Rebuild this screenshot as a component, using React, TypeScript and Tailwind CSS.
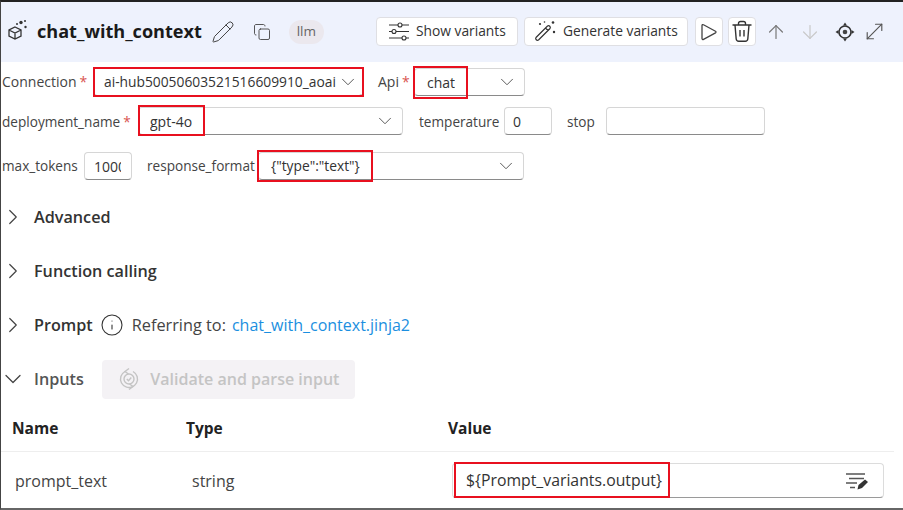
import { ChevronDown, ChevronRight, Pencil, Copy, ArrowUp, ArrowDown, Info, MoveDiagonal } from "lucide-react";

const font = "font-['Open_Sans','Liberation_Sans',sans-serif]";

function Redbox({ className }: { className: string }) {
  return <div className={`absolute border-[2px] border-[#e8101f] pointer-events-none ${className}`} />;
}

function Field({ className, text, chevron }: { className: string; text?: string; chevron?: boolean }) {
  return (
    <div className={`h-[28px] bg-white border border-[#d6d6d6] border-b-[#8a8a8a] rounded-[4px] flex items-center justify-between text-[#333] ${className}`}>
      <span className="whitespace-nowrap overflow-hidden">{text}</span>
      {chevron && <ChevronDown size={22} strokeWidth={1.05} className="text-[#555] shrink-0" />}
    </div>
  );
}

function Label({ text, required, className }: { text: string; required?: boolean; className: string }) {
  return (
    <div className={`flex items-center text-[#444] shrink-0 ${className}`}>
      <span>{text}</span>
      {required && <span className="ml-[3px] text-[#d9534f]">*</span>}
    </div>
  );
}

function ToolButton({ icon, label, className }: { icon: React.ReactNode; label?: string; className: string }) {
  return (
    <div className={`h-[29px] bg-white border border-[#dfdfe3] rounded-[4px] flex items-center justify-center gap-[6px] text-[13.8px] text-[#333] ${className}`}>
      {icon}
      {label && <span>{label}</span>}
    </div>
  );
}

function SectionRow({ title, className }: { title: string; className?: string }) {
  return (
    <div className={`flex items-center h-[24px] ${className ?? ""}`}>
      <ChevronRight size={26} strokeWidth={1.1} className="text-[#444] -ml-[1px]" />
      <span className="ml-[8px] text-[16.2px] font-semibold text-[#333]">{title}</span>
    </div>
  );
}

function NodeIcon() {
  return (
    <svg width="20" height="22" viewBox="0 0 20 22" fill="none" stroke="#333" strokeWidth="1.3" className="ml-[7px] mb-[4px]">
      <path d="M7 8l6 3v6l-6 3-6-3v-6z M1 11l6 3 6-3 M7 14v6" />
      <circle cx="13" cy="3.5" r="1.7" fill="#333" stroke="none" />
      <circle cx="17.5" cy="8" r="1.2" fill="#333" stroke="none" />
      <circle cx="9" cy="5" r="1" fill="#333" stroke="none" />
      <circle cx="17" cy="2" r="1" fill="#333" stroke="none" />
    </svg>
  );
}

function SlidersIcon() {
  return (
    <svg width="22" height="19" viewBox="0 0 22 19" fill="none" stroke="#333" strokeWidth="1.1">
      <path d="M1 3h9M14 3h7M1 9.500h3M8 9.500h13M1 16h13M18 16h3" />
      <circle cx="12" cy="3" r="2" />
      <circle cx="6" cy="9.500" r="2" />
      <circle cx="16" cy="16" r="2" />
    </svg>
  );
}

function WandIcon() {
  return (
    <svg width="23" height="23" viewBox="0 0 23 23" fill="none" stroke="#333" strokeWidth="1.2">
      <path d="M2 17.500L13.500 6a1.800 1.800 0 0 1 2.500 2.500L4.500 20a1.800 1.800 0 0 1-2.500-2.500z M11.500 8l2.500 2.500" />
      <circle cx="6" cy="4" r="1.100" fill="#333" stroke="none" />
      <circle cx="19" cy="2.500" r="1.300" fill="#333" stroke="none" />
      <circle cx="20" cy="12" r="1.200" fill="#333" stroke="none" />
      <circle cx="10.500" cy="2" r=".8" fill="#333" stroke="none" />
    </svg>
  );
}

function PlayIcon() {
  return (
    <svg width="18" height="20" viewBox="0 0 18 20" fill="none" stroke="#444" strokeWidth="1.3" strokeLinejoin="round">
      <path d="M2 3.500a1 1 0 0 1 1.500-.8l12 6.500a1 1 0 0 1 0 1.700l-12 6.500a1 1 0 0 1-1.500-.9z" />
    </svg>
  );
}

function TrashIcon() {
  return (
    <svg width="22" height="23" viewBox="0 0 22 23" fill="none" stroke="#333" strokeWidth="1.4">
      <path d="M1.500 5h19M7.500 5V3.500a2 2 0 0 1 2-2h3a2 2 0 0 1 2 2V5" />
      <path d="M4 5l1.200 14a2.500 2.500 0 0 0 2.500 2.200h6.600a2.500 2.500 0 0 0 2.500-2.200L18 5" />
      <path d="M9 10v6.500M13 10v6.500" />
    </svg>
  );
}

function TargetIcon() {
  return (
    <svg width="22" height="22" viewBox="0 0 22 22" fill="none" stroke="#333" className="ml-[13px]">
      <circle cx="11" cy="11" r="6" strokeWidth="1.6" />
      <circle cx="11" cy="11" r="2.300" fill="#444" stroke="none" />
      <path d="M11 1.500l-2 3h4z M11 20.500l-2-3h4z M1.500 11l3-2v4z M20.500 11l-3-2v4z" fill="#333" stroke="none" />
    </svg>
  );
}

function ValidateIcon() {
  return (
    <svg width="20" height="24" viewBox="0 0 20 24" fill="none" stroke="currentColor" strokeWidth="1.400">
      <path d="M6 4.500A8.500 8.500 0 0 0 14 19.500M14 4.500A8.500 8.500 0 0 1 6 19.500" />
      <circle cx="10" cy="12" r="5" />
      <path d="M7.800 12l1.700 1.700 2.800-3.200M10 1.500L6 4.500l3.500 2.500M10 22.500l4-3-3.500-2.500" />
    </svg>
  );
}

function EditLinesIcon() {
  return (
    <svg width="24" height="20" viewBox="0 0 24 20" fill="none" stroke="#555" strokeWidth="1.300">
      <path d="M2 3h19M5 7.500h15M2 12h11M6 16.500h5" />
      <path d="M13.500 18.500l1-4.500 6.500-5.500 3 2.500-6 6z" fill="#333" stroke="none" />
    </svg>
  );
}

export default function App() {
  return (
    <div className={`relative w-[903px] h-[510px] overflow-hidden bg-white border-t-[2px] border-t-[#222] border-l border-l-[#444] border-b-[2px] border-b-[#666] ${font}`}>
      {/* header */}
      <div className="h-[60px] bg-[#eef2fd] flex items-center pb-[1px]">
        <NodeIcon />
        <span className="ml-[9px] text-[18.1px] font-bold text-[#1a1a1a]">chat_with_context</span>
        <Pencil size={24} strokeWidth={1} className="ml-[9px] text-[#444]" />
        <Copy size={18} strokeWidth={1.2} className="ml-[18px] text-[#444]" />
        <div className="ml-[18px] w-[35px] h-[24px] rounded-full bg-[#ebe8ee] flex items-center justify-center text-[13.5px] text-[#666]">llm</div>
        <ToolButton className="ml-[52px] w-[142px]" icon={<SlidersIcon />} label="Show variants" />
        <ToolButton className="ml-[6px] w-[164px]" icon={<WandIcon />} label="Generate variants" />
        <ToolButton className="ml-[7px] w-[28px]" icon={<PlayIcon />} />
        <ToolButton className="ml-[5px] w-[28px]" icon={<TrashIcon />} />
        <ArrowUp size={22} strokeWidth={1.3} className="ml-[9px] text-[#777]" />
        <ArrowDown size={22} strokeWidth={1.3} className="ml-[12px] text-[#c8c8c8]" />
        <TargetIcon />
        <MoveDiagonal size={25} strokeWidth={1.1} className="ml-[6px] text-[#555]" />
      </div>

      {/* row 1 */}
      <div className="flex items-center mt-[6px] text-[14px]">
        <Label text="Connection" required className="w-[92px] pl-[1px] pb-[1px]" />
        <Field className="w-[270px] pl-[10px] pr-[3px] border-transparent text-[13.8px]" text="ai-hub50050603521516609910_aoai" chevron />
        <Label text="Api" required className="ml-[15px] w-[36px] pb-[1px]" />
        <Field className="w-[111px] pl-[12px] pr-[6px]" text="chat" chevron />
      </div>

      {/* row 2 */}
      <div className="flex items-center mt-[11px] text-[13.6px]">
        <Label text="deployment_name" required className="w-[137px] pl-[1px] pt-[2px]" />
        <Field className="w-[265px] pl-[11px] pr-[6px] text-[14px]" text="gpt-4o" chevron />
        <Label text="temperature" className="ml-[16px] w-[85px] pt-[2px]" />
        <Field className="w-[48px] pl-[8px] text-[14px]" text="0" />
        <Label text="stop" className="ml-[15px] w-[39px] pt-[2px]" />
        <Field className="w-[159px]" />
      </div>

      {/* row 3 */}
      <div className="flex items-center mt-[17px] text-[13.6px]">
        <Label text="max_tokens" className="w-[83px] pl-[1px] pt-[1px]" />
        <Field className="w-[48px] pl-[9px] pr-[10px] text-[14px]" text="1000" />
        <Label text="response_format" className="ml-[15px] w-[111px] pt-[1px]" />
        <Field className="w-[266px] pl-[12px] pr-[6px] text-[13.8px]" text={'{"type":"text"}'} chevron />
      </div>

      <SectionRow title="Advanced" className="mt-[25px]" />
      <SectionRow title="Function calling" className="mt-[30px]" />

      {/* prompt */}
      <div className="flex items-center h-[24px] mt-[30px]">
        <ChevronRight size={26} strokeWidth={1.1} className="text-[#444] -ml-[1px]" />
        <span className="ml-[8px] text-[16.2px] font-semibold text-[#333]">Prompt</span>
        <Info size={24} strokeWidth={1.1} className="ml-[7px] text-[#333]" />
        <span className="ml-[8px] text-[16.3px] text-[#444]">Referring to:</span>
        <span className="ml-[6px] text-[16px] text-[#1b8fe0]">chat_with_context.jinja2</span>
      </div>

      {/* inputs */}
      <div className="flex items-center h-[40px] mt-[22px]">
        <ChevronDown size={28} strokeWidth={1.1} className="text-[#444] -ml-[2px]" />
        <span className="ml-[7px] text-[16.2px] font-semibold text-[#555]">Inputs</span>
        <div className="ml-[18px] w-[253px] h-[39px] bg-[#f4f2f5] rounded-[4px] flex items-center justify-center gap-[11px] pl-[2px] text-[16px] font-semibold text-[#c4c4c4]">
          <ValidateIcon />
          <span>Validate and parse input</span>
        </div>
      </div>

      {/* table */}
      <div className="grid grid-cols-[174px_262px_1fr] mt-[17px] h-[36px] mr-[9px] border-b border-[#eeeeee] text-[15.5px] font-bold text-[#222] pl-[11px] leading-[24px]">
        <span>Name</span>
        <span>Type</span>
        <span>Value</span>
      </div>
      <div className="grid grid-cols-[177px_262px_1fr] mt-[11px] pl-[14px] items-center text-[16px] text-[#444]">
        <span>prompt_text</span>
        <span>string</span>
        <div className="h-[35px] w-[432px] -ml-[2px] bg-white border border-[#dcdcdc] border-b-[#9a9a9a] rounded-[4px] flex items-center justify-between pl-[13px] pr-[15px] text-[#333]">
          <span className="text-[15.8px]">{"${Prompt_variants.output}"}</span>
          <EditLinesIcon />
        </div>
      </div>

      {/* annotation boxes */}
      <Redbox className="left-[92px] top-[65px] w-[271px] h-[30px]" />
      <Redbox className="left-[412px] top-[64px] w-[55px] h-[33px]" />
      <Redbox className="left-[137px] top-[103px] w-[67px] h-[31px]" />
      <Redbox className="left-[256px] top-[148px] w-[116px] h-[32px]" />
      <Redbox className="left-[453px] top-[460px] w-[216px] h-[36px]" />
    </div>
  );
}
